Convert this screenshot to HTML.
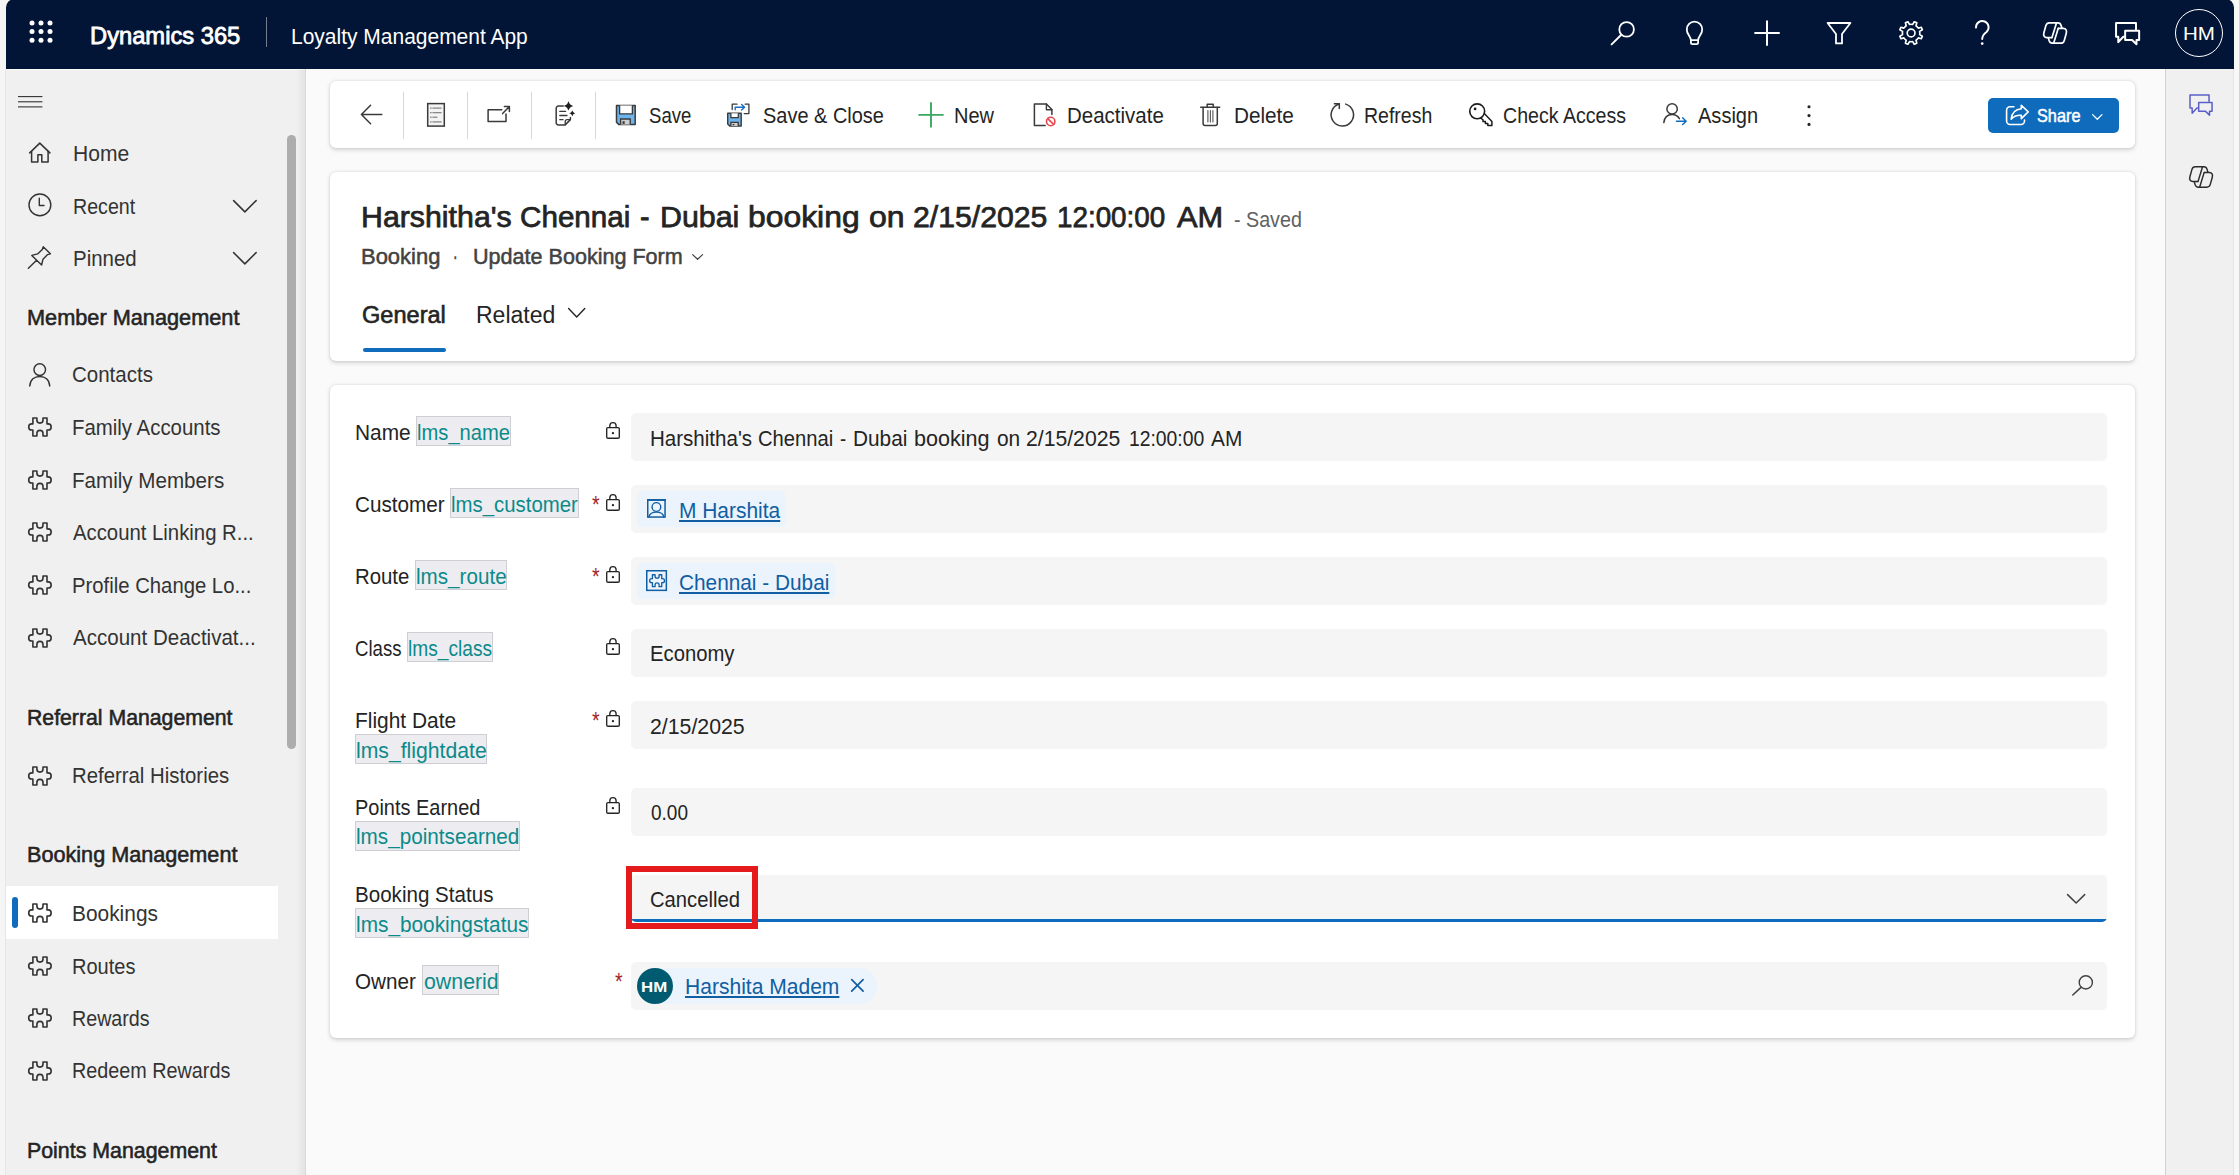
<!DOCTYPE html>
<html lang="en"><head><meta charset="utf-8"><title>Booking: Harshitha's Chennai - Dubai booking - Dynamics 365</title>
<style>
html,body{margin:0;padding:0}
body{width:2239px;height:1175px;overflow:hidden;position:relative;background:#f5f5f5;font-family:"Liberation Sans", Arial, sans-serif;-webkit-font-smoothing:antialiased}
span{display:block}
</style></head><body>
<div style="position:absolute;left:2234px;top:0px;width:5px;height:1175px;background:#f8f8f8;"></div>
<div style="position:absolute;left:6px;top:69px;width:2228px;height:1106px;background:#fafafa;"></div>
<header>
<div style="position:absolute;left:6px;top:-1.3px;width:2228px;height:70.3px;background:#021536;border-radius:8.5px 8.5px 0 0;"></div>
<svg style="position:absolute;left:28px;top:19.2px;overflow:visible" width="26" height="26" viewBox="0 0 26 26" ><circle cx="4" cy="4" r="2.5" fill="#fff"/><circle cx="4" cy="12.600000000000001" r="2.5" fill="#fff"/><circle cx="4" cy="21.200000000000003" r="2.5" fill="#fff"/><circle cx="13" cy="4" r="2.5" fill="#fff"/><circle cx="13" cy="12.600000000000001" r="2.5" fill="#fff"/><circle cx="13" cy="21.200000000000003" r="2.5" fill="#fff"/><circle cx="22" cy="4" r="2.5" fill="#fff"/><circle cx="22" cy="12.600000000000001" r="2.5" fill="#fff"/><circle cx="22" cy="21.200000000000003" r="2.5" fill="#fff"/></svg>
<span style="position:absolute;left:89.89px;top:21px;font-size:23.5px;line-height:30px;font-weight:400;color:#fff;white-space:pre;transform-origin:0 0;transform:scaleX(1.0093);-webkit-text-stroke:0.8px #fff;">Dynamics 365</span>
<div style="position:absolute;left:266px;top:17px;width:1px;height:30px;background:rgba(255,255,255,.45);"></div>
<span style="position:absolute;left:290.77px;top:23px;font-size:21.5px;line-height:28px;font-weight:400;color:#fff;white-space:pre;transform-origin:0 0;transform:scaleX(0.9759);">Loyalty Management App</span>
<svg style="position:absolute;left:1608px;top:18px;overflow:visible" width="30" height="30" viewBox="0 0 30 30" ><circle cx="18.59999999999991" cy="11.399999999999999" r="7.3" fill="none" stroke="#fff" stroke-width="1.8"/><path d="M13.299999999999955 16.799999999999997 L3.599999999999909 26.4" fill="none" stroke="#fff" stroke-width="1.9" stroke-linecap="round" stroke-linejoin="round" /></svg>
<svg style="position:absolute;left:1682px;top:18px;overflow:visible" width="26" height="30" viewBox="0 0 26 30" ><path d="M8.9 22.200000000000003 C8.9 18.200000000000003 4.8 17 4.8 11.399999999999999 A7.7 7.7 0 0 1 20.2 11.399999999999999 C20.2 17 16.1 18.200000000000003 16.1 22.200000000000003 Z" fill="none" stroke="#fff" stroke-width="1.8" stroke-linecap="round" stroke-linejoin="round" /><path d="M8.9 22.200000000000003 V24.6 a1.6 1.6 0 0 0 1.6 1.6 H14.5 a1.6 1.6 0 0 0 1.6 -1.6 V22.200000000000003" fill="none" stroke="#fff" stroke-width="1.8" stroke-linecap="round" stroke-linejoin="round" /></svg>
<svg style="position:absolute;left:1752px;top:18px;overflow:visible" width="30" height="30" viewBox="0 0 30 30" ><path d="M15 3.2 V27 M3.1 15.1 H27" fill="none" stroke="#fff" stroke-width="2.0" stroke-linecap="round" stroke-linejoin="round" stroke-linecap="butt"/></svg>
<svg style="position:absolute;left:1824px;top:18px;overflow:visible" width="30" height="30" viewBox="0 0 30 30" ><path d="M3.599999999999909 5 H26.40000000000009 L18 16 V25.4 H12 V16 Z" fill="none" stroke="#fff" stroke-width="1.8" stroke-linecap="round" stroke-linejoin="round" stroke-linejoin="miter"/></svg>
<svg style="position:absolute;left:1895.6px;top:18px;overflow:visible" width="30" height="30" viewBox="0 0 30 30" ><path d="M23.65 16.63 L26.36 18.18 L25.31 20.72 L22.30 19.89 A8.70 8.70 0 0 1 19.99 22.20 L20.82 25.21 L18.28 26.26 L16.73 23.55 A8.70 8.70 0 0 1 13.47 23.55 L11.92 26.26 L9.38 25.21 L10.21 22.20 A8.70 8.70 0 0 1 7.90 19.89 L4.89 20.72 L3.84 18.18 L6.55 16.63 A8.70 8.70 0 0 1 6.55 13.37 L3.84 11.82 L4.89 9.28 L7.90 10.11 A8.70 8.70 0 0 1 10.21 7.80 L9.38 4.79 L11.92 3.74 L13.47 6.45 A8.70 8.70 0 0 1 16.73 6.45 L18.28 3.74 L20.82 4.79 L19.99 7.80 A8.70 8.70 0 0 1 22.30 10.11 L25.31 9.28 L26.36 11.82 L23.65 13.37 A8.70 8.70 0 0 1 23.65 16.63 Z" fill="none" stroke="#fff" stroke-width="1.65" stroke-linecap="round" stroke-linejoin="round" /><circle cx="15.1" cy="15" r="3.9" fill="none" stroke="#fff" stroke-width="1.65"/></svg>
<svg style="position:absolute;left:1970px;top:18px;overflow:visible" width="26" height="30" viewBox="0 0 26 30" ><path d="M6.000000000000045 9.600000000000001 A6.3 6.3 0 1 1 16.500000000000046 14 C13.700000000000045 16.200000000000003 12.200000000000045 17.6 12.200000000000045 21" fill="none" stroke="#fff" stroke-width="1.9" stroke-linecap="round" stroke-linejoin="round" /><circle cx="12.200000000000045" cy="25.6" r="1.35" fill="#fff"/></svg>
<svg style="position:absolute;left:2042.9px;top:21.9px;overflow:visible" width="24.2" height="22" viewBox="0 0 24.2 22" ><path d="M13.8 0.8 H6.4 C4.4 0.8 3.4 1.9 2.9 3.6 L0.9 10.8 C0.2 13.4 1.2 15.6 3.8 15.6 H8.8" fill="none" stroke="#fff" stroke-width="1.7" stroke-linecap="round" stroke-linejoin="round" /><path d="M13.8 0.8 H15 C16.8 0.8 17.6 1.8 18.1 3.4 L18.9 6.2" fill="none" stroke="#fff" stroke-width="1.7" stroke-linecap="round" stroke-linejoin="round" /><path d="M10.4 21.2 H17.8 C19.8 21.2 20.8 20.1 21.3 18.4 L23.3 11.2 C24 8.6 23 6.4 20.4 6.4 H15.4" fill="none" stroke="#fff" stroke-width="1.7" stroke-linecap="round" stroke-linejoin="round" /><path d="M10.4 21.2 H9.2 C7.4 21.2 6.6 20.2 6.1 18.6 L5.3 15.8" fill="none" stroke="#fff" stroke-width="1.7" stroke-linecap="round" stroke-linejoin="round" /><path d="M13.4 1.2 L9 15.6" fill="none" stroke="#fff" stroke-width="1.7" stroke-linecap="round" stroke-linejoin="round" /><path d="M15.2 6.4 L10.8 20.8" fill="none" stroke="#fff" stroke-width="1.7" stroke-linecap="round" stroke-linejoin="round" /></svg>
<svg style="position:absolute;left:2114.7px;top:22.05px;overflow:visible" width="25.2" height="23.0" viewBox="0 0 25.2 23" ><path d="M21 7.8 V1.05 H1.05 V14.75 H3.3 V20.2 L8.3 14.75 H9.2" fill="none" stroke="#fff" stroke-width="2.0" stroke-linecap="round" stroke-linejoin="round" stroke-linejoin="miter" stroke-linecap="butt"/><path d="M10.15 8.85 H24.15 V17.95 H21.5 V22.3 L17.1 17.95 H10.15 Z" fill="none" stroke="#fff" stroke-width="2.0" stroke-linecap="round" stroke-linejoin="round" stroke-linejoin="miter" stroke-linecap="butt"/></svg>
<div style="position:absolute;left:2174.8px;top:8.9px;width:48.3px;height:48.3px;border-radius:50%;box-sizing:border-box;border:1.3px solid #fff;"></div>
<span style="position:absolute;left:2182.92px;top:21px;font-size:19px;line-height:25px;font-weight:400;color:#fff;white-space:pre;transform-origin:0 0;transform:scaleX(1.0822);">HM</span>
</header>
<nav aria-label="Site map">
<div style="position:absolute;left:6px;top:69px;width:299px;height:1106px;background:#f0f0f0;"></div>
<div style="position:absolute;left:6px;top:69px;width:299px;height:1.2px;background:#fbfbfb;"></div>
<div style="position:absolute;left:296px;top:69px;width:9px;height:1106px;background:linear-gradient(to right,rgba(0,0,0,0),rgba(0,0,0,.055));"></div>
<div style="position:absolute;left:305px;top:69px;width:1px;height:1106px;background:#d9d9d9;"></div>
<div style="position:absolute;left:287px;top:135px;width:8.8px;height:613.5px;background:#adadad;border-radius:4.4px;"></div>
<svg style="position:absolute;left:17.8px;top:95.7px;overflow:visible" width="25" height="13" viewBox="0 0 25 13" ><rect x="0" y="0" width="24.4" height="1.15" fill="#3b3b3b"/><rect x="0" y="5.2" width="24.4" height="1.15" fill="#3b3b3b"/><rect x="0" y="10.3" width="24.4" height="1.15" fill="#3b3b3b"/></svg>
<svg style="position:absolute;left:28px;top:141px;overflow:visible" width="24" height="23" viewBox="0 0 24 23" ><path d="M1.70 11.90 L11.80 2.10 L21.90 11.90" fill="none" stroke="#333" stroke-width="1.5" stroke-linecap="round" stroke-linejoin="round" stroke-linejoin="miter" stroke-linecap="butt"/><path d="M3.60 10.60 V21.00 H9.90 V13.70 H13.80 V21.00 H20.10 V10.60" fill="none" stroke="#333" stroke-width="1.5" stroke-linecap="round" stroke-linejoin="round" stroke-linejoin="miter" stroke-linecap="butt"/></svg>
<span style="position:absolute;left:72.77px;top:140px;font-size:21.5px;line-height:28px;font-weight:400;color:#333;white-space:pre;transform-origin:0 0;transform:scaleX(0.9794);">Home</span>
<svg style="position:absolute;left:28px;top:193px;overflow:visible" width="24" height="24" viewBox="0 0 24 24" ><circle cx="11.899999999999999" cy="11.900000000000006" r="10.9" fill="none" stroke="#333" stroke-width="1.4"/><path d="M11.299999999999997 5.199999999999989 V12.5 H16" fill="none" stroke="#333" stroke-width="1.4" stroke-linecap="round" stroke-linejoin="round" stroke-linejoin="miter" stroke-linecap="butt"/></svg>
<span style="position:absolute;left:72.84px;top:193px;font-size:21.5px;line-height:28px;font-weight:400;color:#333;white-space:pre;transform-origin:0 0;transform:scaleX(0.9122);">Recent</span>
<svg style="position:absolute;left:233px;top:200px;overflow:visible" width="23.75" height="12.5" viewBox="0 0 23.75 12.5" ><path d="M0.6 0.6 L11.875 11.9 L23.15 0.6" fill="none" stroke="#333" stroke-width="1.5" stroke-linecap="round" stroke-linejoin="round" stroke-linejoin="miter"/></svg>
<svg style="position:absolute;left:27px;top:245px;overflow:visible" width="25" height="25" viewBox="0 0 25 25" ><path d="M16.20 1.80 L23.40 8.80 L20.60 9.60 L16.00 14.20 L14.60 20.00 L4.80 10.40 L10.60 8.90 L15.30 4.40 Z M9.60 15.20 L1.40 23.20" fill="none" stroke="#333" stroke-width="1.4" stroke-linecap="round" stroke-linejoin="round" stroke-linejoin="miter"/></svg>
<span style="position:absolute;left:72.80px;top:245px;font-size:21.5px;line-height:28px;font-weight:400;color:#333;white-space:pre;transform-origin:0 0;transform:scaleX(0.9502);">Pinned</span>
<svg style="position:absolute;left:233px;top:252px;overflow:visible" width="23.75" height="12.5" viewBox="0 0 23.75 12.5" ><path d="M0.6 0.6 L11.875 11.9 L23.15 0.6" fill="none" stroke="#333" stroke-width="1.5" stroke-linecap="round" stroke-linejoin="round" stroke-linejoin="miter"/></svg>
<span style="position:absolute;left:27.26px;top:304px;font-size:21.5px;line-height:28px;font-weight:400;color:#242424;white-space:pre;transform-origin:0 0;transform:scaleX(1.0101);-webkit-text-stroke:0.55px #242424;">Member Management</span>
<svg style="position:absolute;left:29.25px;top:362.5px;overflow:visible" width="21.5" height="23.5" viewBox="0 0 21.5 23.5" ><circle cx="10.75" cy="6.6" r="5.8" fill="none" stroke="#333" stroke-width="1.45"/><path d="M0.8 23 C1.2 16.6 5.4 13.4 10.75 13.4 C16.1 13.4 20.3 16.6 20.7 23" fill="none" stroke="#333" stroke-width="1.45" stroke-linecap="round" stroke-linejoin="round" stroke-linecap="butt"/></svg>
<span style="position:absolute;left:72.30px;top:361px;font-size:21.5px;line-height:28px;font-weight:400;color:#333;white-space:pre;transform-origin:0 0;transform:scaleX(0.9537);">Contacts</span>
<div style="position:absolute;left:6px;top:886px;width:272px;height:53px;background:#fff;"></div>
<div style="position:absolute;left:12px;top:897.25px;width:6px;height:30.5px;background:#0f6cbd;border-radius:3px;"></div>
<svg style="position:absolute;left:28px;top:417.4px;overflow:visible" width="24.0" height="20.0" viewBox="0 0 24 20" ><path d="M4.9 0.95 H8.9 V3.1 A3.05 3.05 0 0 0 15 3.1 V0.95 H19 V6.9 H20.1 A3.07 3.07 0 0 1 20.1 13.05 H19 V19 H15 V16.4 A3.05 3.05 0 0 0 8.9 16.4 V19 H4.9 V13.05 H3.77 A3.07 3.07 0 0 1 3.77 6.9 H4.9 Z" fill="none" stroke="#333" stroke-width="1.6" stroke-linecap="round" stroke-linejoin="round" stroke-linejoin="miter" stroke-linecap="butt"/></svg>
<span style="position:absolute;left:72.30px;top:414px;font-size:21.5px;line-height:28px;font-weight:400;color:#333;white-space:pre;transform-origin:0 0;transform:scaleX(0.9489);">Family Accounts</span>
<svg style="position:absolute;left:28px;top:469.9px;overflow:visible" width="24.0" height="20.0" viewBox="0 0 24 20" ><path d="M4.9 0.95 H8.9 V3.1 A3.05 3.05 0 0 0 15 3.1 V0.95 H19 V6.9 H20.1 A3.07 3.07 0 0 1 20.1 13.05 H19 V19 H15 V16.4 A3.05 3.05 0 0 0 8.9 16.4 V19 H4.9 V13.05 H3.77 A3.07 3.07 0 0 1 3.77 6.9 H4.9 Z" fill="none" stroke="#333" stroke-width="1.6" stroke-linecap="round" stroke-linejoin="round" stroke-linejoin="miter" stroke-linecap="butt"/></svg>
<span style="position:absolute;left:72.29px;top:467px;font-size:21.5px;line-height:28px;font-weight:400;color:#333;white-space:pre;transform-origin:0 0;transform:scaleX(0.9578);">Family Members</span>
<svg style="position:absolute;left:28px;top:522.4px;overflow:visible" width="24.0" height="20.0" viewBox="0 0 24 20" ><path d="M4.9 0.95 H8.9 V3.1 A3.05 3.05 0 0 0 15 3.1 V0.95 H19 V6.9 H20.1 A3.07 3.07 0 0 1 20.1 13.05 H19 V19 H15 V16.4 A3.05 3.05 0 0 0 8.9 16.4 V19 H4.9 V13.05 H3.77 A3.07 3.07 0 0 1 3.77 6.9 H4.9 Z" fill="none" stroke="#333" stroke-width="1.6" stroke-linecap="round" stroke-linejoin="round" stroke-linejoin="miter" stroke-linecap="butt"/></svg>
<span style="position:absolute;left:73.25px;top:519px;font-size:21.5px;line-height:28px;font-weight:400;color:#333;white-space:pre;transform-origin:0 0;transform:scaleX(0.9449);">Account Linking R...</span>
<svg style="position:absolute;left:28px;top:575.15px;overflow:visible" width="24.0" height="20.0" viewBox="0 0 24 20" ><path d="M4.9 0.95 H8.9 V3.1 A3.05 3.05 0 0 0 15 3.1 V0.95 H19 V6.9 H20.1 A3.07 3.07 0 0 1 20.1 13.05 H19 V19 H15 V16.4 A3.05 3.05 0 0 0 8.9 16.4 V19 H4.9 V13.05 H3.77 A3.07 3.07 0 0 1 3.77 6.9 H4.9 Z" fill="none" stroke="#333" stroke-width="1.6" stroke-linecap="round" stroke-linejoin="round" stroke-linejoin="miter" stroke-linecap="butt"/></svg>
<span style="position:absolute;left:72.31px;top:572px;font-size:21.5px;line-height:28px;font-weight:400;color:#333;white-space:pre;transform-origin:0 0;transform:scaleX(0.9438);">Profile Change Lo...</span>
<svg style="position:absolute;left:28px;top:627.65px;overflow:visible" width="24.0" height="20.0" viewBox="0 0 24 20" ><path d="M4.9 0.95 H8.9 V3.1 A3.05 3.05 0 0 0 15 3.1 V0.95 H19 V6.9 H20.1 A3.07 3.07 0 0 1 20.1 13.05 H19 V19 H15 V16.4 A3.05 3.05 0 0 0 8.9 16.4 V19 H4.9 V13.05 H3.77 A3.07 3.07 0 0 1 3.77 6.9 H4.9 Z" fill="none" stroke="#333" stroke-width="1.6" stroke-linecap="round" stroke-linejoin="round" stroke-linejoin="miter" stroke-linecap="butt"/></svg>
<span style="position:absolute;left:73.25px;top:624px;font-size:21.5px;line-height:28px;font-weight:400;color:#333;white-space:pre;transform-origin:0 0;transform:scaleX(0.9554);">Account Deactivat...</span>
<span style="position:absolute;left:27.29px;top:704px;font-size:21.5px;line-height:28px;font-weight:400;color:#242424;white-space:pre;transform-origin:0 0;transform:scaleX(0.9879);-webkit-text-stroke:0.55px #242424;">Referral Management</span>
<svg style="position:absolute;left:28px;top:765.65px;overflow:visible" width="24.0" height="20.0" viewBox="0 0 24 20" ><path d="M4.9 0.95 H8.9 V3.1 A3.05 3.05 0 0 0 15 3.1 V0.95 H19 V6.9 H20.1 A3.07 3.07 0 0 1 20.1 13.05 H19 V19 H15 V16.4 A3.05 3.05 0 0 0 8.9 16.4 V19 H4.9 V13.05 H3.77 A3.07 3.07 0 0 1 3.77 6.9 H4.9 Z" fill="none" stroke="#333" stroke-width="1.6" stroke-linecap="round" stroke-linejoin="round" stroke-linejoin="miter" stroke-linecap="butt"/></svg>
<span style="position:absolute;left:72.30px;top:762px;font-size:21.5px;line-height:28px;font-weight:400;color:#333;white-space:pre;transform-origin:0 0;transform:scaleX(0.9463);">Referral Histories</span>
<span style="position:absolute;left:27.27px;top:841px;font-size:21.5px;line-height:28px;font-weight:400;color:#242424;white-space:pre;transform-origin:0 0;transform:scaleX(1.0061);-webkit-text-stroke:0.55px #242424;">Booking Management</span>
<svg style="position:absolute;left:28px;top:903.4px;overflow:visible" width="24.0" height="20.0" viewBox="0 0 24 20" ><path d="M4.9 0.95 H8.9 V3.1 A3.05 3.05 0 0 0 15 3.1 V0.95 H19 V6.9 H20.1 A3.07 3.07 0 0 1 20.1 13.05 H19 V19 H15 V16.4 A3.05 3.05 0 0 0 8.9 16.4 V19 H4.9 V13.05 H3.77 A3.07 3.07 0 0 1 3.77 6.9 H4.9 Z" fill="none" stroke="#333" stroke-width="1.6" stroke-linecap="round" stroke-linejoin="round" stroke-linejoin="miter" stroke-linecap="butt"/></svg>
<span style="position:absolute;left:72.28px;top:900px;font-size:21.5px;line-height:28px;font-weight:400;color:#333;white-space:pre;transform-origin:0 0;transform:scaleX(0.9718);">Bookings</span>
<svg style="position:absolute;left:28px;top:955.9px;overflow:visible" width="24.0" height="20.0" viewBox="0 0 24 20" ><path d="M4.9 0.95 H8.9 V3.1 A3.05 3.05 0 0 0 15 3.1 V0.95 H19 V6.9 H20.1 A3.07 3.07 0 0 1 20.1 13.05 H19 V19 H15 V16.4 A3.05 3.05 0 0 0 8.9 16.4 V19 H4.9 V13.05 H3.77 A3.07 3.07 0 0 1 3.77 6.9 H4.9 Z" fill="none" stroke="#333" stroke-width="1.6" stroke-linecap="round" stroke-linejoin="round" stroke-linejoin="miter" stroke-linecap="butt"/></svg>
<span style="position:absolute;left:72.32px;top:953px;font-size:21.5px;line-height:28px;font-weight:400;color:#333;white-space:pre;transform-origin:0 0;transform:scaleX(0.9304);">Routes</span>
<svg style="position:absolute;left:28px;top:1008.4px;overflow:visible" width="24.0" height="20.0" viewBox="0 0 24 20" ><path d="M4.9 0.95 H8.9 V3.1 A3.05 3.05 0 0 0 15 3.1 V0.95 H19 V6.9 H20.1 A3.07 3.07 0 0 1 20.1 13.05 H19 V19 H15 V16.4 A3.05 3.05 0 0 0 8.9 16.4 V19 H4.9 V13.05 H3.77 A3.07 3.07 0 0 1 3.77 6.9 H4.9 Z" fill="none" stroke="#333" stroke-width="1.6" stroke-linecap="round" stroke-linejoin="round" stroke-linejoin="miter" stroke-linecap="butt"/></svg>
<span style="position:absolute;left:72.34px;top:1005px;font-size:21.5px;line-height:28px;font-weight:400;color:#333;white-space:pre;transform-origin:0 0;transform:scaleX(0.9147);">Rewards</span>
<svg style="position:absolute;left:28px;top:1060.9px;overflow:visible" width="24.0" height="20.0" viewBox="0 0 24 20" ><path d="M4.9 0.95 H8.9 V3.1 A3.05 3.05 0 0 0 15 3.1 V0.95 H19 V6.9 H20.1 A3.07 3.07 0 0 1 20.1 13.05 H19 V19 H15 V16.4 A3.05 3.05 0 0 0 8.9 16.4 V19 H4.9 V13.05 H3.77 A3.07 3.07 0 0 1 3.77 6.9 H4.9 Z" fill="none" stroke="#333" stroke-width="1.6" stroke-linecap="round" stroke-linejoin="round" stroke-linejoin="miter" stroke-linecap="butt"/></svg>
<span style="position:absolute;left:72.33px;top:1057px;font-size:21.5px;line-height:28px;font-weight:400;color:#333;white-space:pre;transform-origin:0 0;transform:scaleX(0.9203);">Redeem Rewards</span>
<span style="position:absolute;left:27.28px;top:1137px;font-size:21.5px;line-height:28px;font-weight:400;color:#242424;white-space:pre;transform-origin:0 0;transform:scaleX(0.9932);-webkit-text-stroke:0.55px #242424;">Points Management</span>
</nav>
<aside>
<div style="position:absolute;left:2165px;top:69px;width:69px;height:1106px;background:#f0f0f0;"></div>
<div style="position:absolute;left:2164.5px;top:69px;width:1px;height:1106px;background:#d1d1d1;"></div>
<div style="position:absolute;left:2233.4px;top:69px;width:1px;height:1106px;background:#e4e4e4;"></div>
<div style="position:absolute;left:5px;top:69px;width:1px;height:1106px;background:#e6e6e6;"></div>
<svg style="position:absolute;left:2188.8px;top:94.0px;overflow:visible" width="24.066" height="21.965" viewBox="0 0 25.2 23" ><path d="M21 7.8 V1.05 H1.05 V14.75 H3.3 V20.2 L8.3 14.75 H9.2" fill="none" stroke="#5b5fc7" stroke-width="1.5706806282722514" stroke-linecap="round" stroke-linejoin="round" stroke-linejoin="miter" stroke-linecap="butt"/><path d="M10.15 8.85 H24.15 V17.95 H21.5 V22.3 L17.1 17.95 H10.15 Z" fill="none" stroke="#5b5fc7" stroke-width="1.5706806282722514" stroke-linecap="round" stroke-linejoin="round" stroke-linejoin="miter" stroke-linecap="butt"/></svg>
<svg style="position:absolute;left:2189px;top:165.9px;overflow:visible" width="24.2" height="22" viewBox="0 0 24.2 22" ><path d="M13.8 0.8 H6.4 C4.4 0.8 3.4 1.9 2.9 3.6 L0.9 10.8 C0.2 13.4 1.2 15.6 3.8 15.6 H8.8" fill="none" stroke="#2b2b2b" stroke-width="1.45" stroke-linecap="round" stroke-linejoin="round" /><path d="M13.8 0.8 H15 C16.8 0.8 17.6 1.8 18.1 3.4 L18.9 6.2" fill="none" stroke="#2b2b2b" stroke-width="1.45" stroke-linecap="round" stroke-linejoin="round" /><path d="M10.4 21.2 H17.8 C19.8 21.2 20.8 20.1 21.3 18.4 L23.3 11.2 C24 8.6 23 6.4 20.4 6.4 H15.4" fill="none" stroke="#2b2b2b" stroke-width="1.45" stroke-linecap="round" stroke-linejoin="round" /><path d="M10.4 21.2 H9.2 C7.4 21.2 6.6 20.2 6.1 18.6 L5.3 15.8" fill="none" stroke="#2b2b2b" stroke-width="1.45" stroke-linecap="round" stroke-linejoin="round" /><path d="M13.4 1.2 L9 15.6" fill="none" stroke="#2b2b2b" stroke-width="1.45" stroke-linecap="round" stroke-linejoin="round" /><path d="M15.2 6.4 L10.8 20.8" fill="none" stroke="#2b2b2b" stroke-width="1.45" stroke-linecap="round" stroke-linejoin="round" /></svg>
</aside>
<main>
<div role="toolbar">
<div style="position:absolute;left:330px;top:81px;width:1805px;height:67px;background:#fff;border-radius:6px;box-shadow:0 1.5px 4px rgba(0,0,0,.16),0 0 2px rgba(0,0,0,.10);"></div>
<svg style="position:absolute;left:359px;top:103px;overflow:visible" width="25" height="23" viewBox="0 0 25 23" ><path d="M22.8 11.5 H2.4 M11.6 2.3 L2.4 11.5 L11.6 20.7" fill="none" stroke="#3a3a3a" stroke-width="1.5" stroke-linecap="round" stroke-linejoin="round" stroke-linejoin="miter" stroke-linecap="butt"/></svg>
<div style="position:absolute;left:403px;top:91.5px;width:1px;height:47px;background:#d6d6d6;"></div>
<div style="position:absolute;left:467px;top:91.5px;width:1px;height:47px;background:#d6d6d6;"></div>
<div style="position:absolute;left:531px;top:91.5px;width:1px;height:47px;background:#d6d6d6;"></div>
<div style="position:absolute;left:595px;top:91.5px;width:1px;height:47px;background:#d6d6d6;"></div>
<svg style="position:absolute;left:426px;top:102px;overflow:visible" width="20" height="26" viewBox="0 0 20 26" ><rect x="1.6999999999999886" y="1.5999999999999943" width="16.6" height="22.5" fill="#f3f3f3" stroke="#3a3a3a" stroke-width="1.5"/><rect x="4.20" y="5.55" width="1.3" height="1.1" fill="#555"/><rect x="6.40" y="5.55" width="9.20" height="1.1" fill="#777"/><rect x="4.20" y="10.15" width="1.3" height="1.1" fill="#555"/><rect x="6.40" y="10.15" width="9.20" height="1.1" fill="#777"/><rect x="4.20" y="14.65" width="1.3" height="1.1" fill="#555"/><rect x="6.40" y="14.65" width="5.00" height="1.1" fill="#777"/><rect x="4.20" y="19.35" width="1.3" height="1.1" fill="#555"/><rect x="6.40" y="19.35" width="9.20" height="1.1" fill="#777"/></svg>
<svg style="position:absolute;left:486px;top:104px;overflow:visible" width="25" height="20" viewBox="0 0 25 20" ><path d="M15.80 5.80 H2.10 V17.50 H20.00 V10.00" fill="none" stroke="#3a3a3a" stroke-width="1.5" stroke-linecap="round" stroke-linejoin="round" stroke-linejoin="miter" stroke-linecap="butt"/><path d="M16.60 9.60 L23.20 2.80 M18.40 2.60 H23.40 V7.40" fill="none" stroke="#3a3a3a" stroke-width="1.5" stroke-linecap="round" stroke-linejoin="round" stroke-linejoin="miter" stroke-linecap="butt"/></svg>
<svg style="position:absolute;left:554px;top:100px;overflow:visible" width="24" height="28" viewBox="0 0 24 28" ><path d="M9.20 6.10 H4.40 A2.2 2.2 0 0 0 2.20 8.30 V22.70 A2.2 2.2 0 0 0 4.40 24.90 H11.20 L16.40 19.60 V17.40" fill="none" stroke="#3a3a3a" stroke-width="1.5" stroke-linecap="round" stroke-linejoin="round" /><path d="M11.20 24.60 V21.60 A2 2 0 0 1 13.20 19.60 H16.20" fill="none" stroke="#3a3a3a" stroke-width="1.3" stroke-linecap="round" stroke-linejoin="round" /><path d="M5.80 11.40 H11.60 M5.80 15.50 H13.00 M5.80 19.70 H9.00" fill="none" stroke="#3a3a3a" stroke-width="1.3" stroke-linecap="round" stroke-linejoin="round" stroke-linecap="butt"/><path d="M14.5 1.2000000000000055 C15.91 4.4900000000000055 15.91 4.4900000000000055 19.2 5.900000000000006 C15.91 7.310000000000006 15.91 7.310000000000006 14.5 10.600000000000005 C13.09 7.310000000000006 13.09 7.310000000000006 9.8 5.900000000000006 C13.09 4.4900000000000055 13.09 4.4900000000000055 14.5 1.2000000000000055 Z" fill="#1f1f1f"/><path d="M18.299999999999955 10.199999999999998 C19.229999999999954 12.369999999999997 19.229999999999954 12.369999999999997 21.399999999999956 13.299999999999997 C19.229999999999954 14.229999999999997 19.229999999999954 14.229999999999997 18.299999999999955 16.4 C17.369999999999955 14.229999999999997 17.369999999999955 14.229999999999997 15.199999999999955 13.299999999999997 C17.369999999999955 12.369999999999997 17.369999999999955 12.369999999999997 18.299999999999955 10.199999999999998 Z" fill="#1f1f1f"/></svg>
<svg style="position:absolute;left:614px;top:103px;overflow:visible" width="24" height="24" viewBox="0 0 24 24" ><path d="M2.5 2.5 H21.2 V21.6 H4.9 L2.5 19.200000000000003 Z" fill="#6db3ec" stroke="#3a3a3a" stroke-width="1.5" stroke-linejoin="round"/><path d="M5.600000000000023 2.5 V10.799999999999997 H18.399999999999977 V2.5" fill="#fff" stroke="#3a3a3a" stroke-width="1.35" stroke-linejoin="miter"/><path d="M6.600000000000023 21.6 V16 H16.200000000000045 V21.6" fill="#cfcfcf" stroke="#3a3a3a" stroke-width="1.35" stroke-linejoin="miter"/><rect x="8.5" y="18.200000000000003" width="2.2000000000000455" height="2.65" fill="#3a3a3a"/></svg>
<span style="position:absolute;left:649.25px;top:102px;font-size:21.5px;line-height:28px;font-weight:400;color:#242424;white-space:pre;transform-origin:0 0;transform:scaleX(0.8637);">Save</span>
<svg style="position:absolute;left:726px;top:102px;overflow:visible" width="25" height="26" viewBox="0 0 25 26" ><path d="M1.7000000000000455 11.299999999999997 H15.200000000000045 V23.999999999999996 H3.7000000000000455 L1.7000000000000455 21.999999999999996 Z" fill="#6db3ec" stroke="#3a3a3a" stroke-width="1.4" stroke-linejoin="round"/><path d="M4.899999999999977 11.299999999999997 V15.700000000000003 H12.299999999999955 V11.299999999999997" fill="#fff" stroke="#3a3a3a" stroke-width="1.26" stroke-linejoin="miter"/><path d="M4.899999999999977 23.999999999999996 V20.299999999999997 H12.200000000000045 V23.999999999999996" fill="#cfcfcf" stroke="#3a3a3a" stroke-width="1.26" stroke-linejoin="miter"/><rect x="6.600000000000023" y="22" width="1.7999999999999545" height="1.30" fill="#3a3a3a"/><path d="M6.20 7.60 V2.20 H11.00" fill="none" stroke="#3a3a3a" stroke-width="1.3" stroke-linecap="round" stroke-linejoin="round" stroke-linejoin="miter" stroke-linecap="butt"/><path d="M19.20 2.20 H22.90 V11.60 H18.20" fill="none" stroke="#3a3a3a" stroke-width="1.3" stroke-linecap="round" stroke-linejoin="round" stroke-linejoin="miter" stroke-linecap="butt"/><path d="M9.20 7.80 V5.20 H18.40 M15.60 2.40 L18.60 5.20 L15.60 8.00" fill="none" stroke="#1b6ec2" stroke-width="1.4" stroke-linecap="round" stroke-linejoin="round" stroke-linejoin="miter" stroke-linecap="butt"/></svg>
<span style="position:absolute;left:762.50px;top:102px;font-size:21.5px;line-height:28px;font-weight:400;color:#242424;white-space:pre;transform-origin:0 0;transform:scaleX(0.9281);">Save &amp; Close</span>
<svg style="position:absolute;left:918px;top:102px;overflow:visible" width="26" height="26" viewBox="0 0 26 26" ><path d="M13.00 1.00 V24.80 M1.10 12.90 H24.90" fill="none" stroke="#3aa860" stroke-width="1.9" stroke-linecap="round" stroke-linejoin="round" stroke-linecap="butt"/></svg>
<span style="position:absolute;left:954.07px;top:102px;font-size:21.5px;line-height:28px;font-weight:400;color:#242424;white-space:pre;transform-origin:0 0;transform:scaleX(0.9298);">New</span>
<svg style="position:absolute;left:1032px;top:102px;overflow:visible" width="26" height="26" viewBox="0 0 26 26" ><path d="M13.20 23.60 H2.40 V1.90 H14.40 L19.90 7.60 V12.60" fill="none" stroke="#3a3a3a" stroke-width="1.5" stroke-linecap="round" stroke-linejoin="round" stroke-linejoin="miter" stroke-linecap="butt"/><path d="M14.40 2.00 V7.80 H19.80" fill="none" stroke="#3a3a3a" stroke-width="1.4" stroke-linecap="round" stroke-linejoin="round" stroke-linejoin="miter" stroke-linecap="butt"/><circle cx="18.70" cy="19.50" r="4.2" fill="#fff" stroke="#e8474f" stroke-width="1.6"/><path d="M15.80 16.60 L21.60 22.40" fill="none" stroke="#e8474f" stroke-width="1.6" stroke-linecap="round" stroke-linejoin="round" /></svg>
<span style="position:absolute;left:1066.55px;top:102px;font-size:21.5px;line-height:28px;font-weight:400;color:#242424;white-space:pre;transform-origin:0 0;transform:scaleX(0.9536);">Deactivate</span>
<svg style="position:absolute;left:1199px;top:102px;overflow:visible" width="24" height="26" viewBox="0 0 24 26" ><path d="M1.70 5.20 H20.70 M8.20 5.00 V2.30 H14.20 V5.00" fill="none" stroke="#3a3a3a" stroke-width="1.5" stroke-linecap="round" stroke-linejoin="round" stroke-linejoin="miter" stroke-linecap="butt"/><path d="M4.10 5.40 V21.60 A2 2 0 0 0 6.10 23.60 H16.30 A2 2 0 0 0 18.30 21.60 V5.40" fill="none" stroke="#3a3a3a" stroke-width="1.5" stroke-linecap="round" stroke-linejoin="round" stroke-linecap="butt"/><path d="M8.90 8.60 V20.00 M11.40 8.60 V20.00 M13.90 8.60 V20.00" fill="none" stroke="#555" stroke-width="1.1" stroke-linecap="round" stroke-linejoin="round" stroke-linecap="butt"/></svg>
<span style="position:absolute;left:1234.04px;top:102px;font-size:21.5px;line-height:28px;font-weight:400;color:#242424;white-space:pre;transform-origin:0 0;transform:scaleX(0.9636);">Delete</span>
<svg style="position:absolute;left:1329.5px;top:103.2px;overflow:visible" width="25" height="25" viewBox="0 0 25 25" ><path d="M9.3 1.0 A11.2 11.2 0 1 0 15.7 1.1" fill="none" stroke="#3a3a3a" stroke-width="1.5" stroke-linecap="round" stroke-linejoin="round" stroke-linecap="butt"/><path d="M4.4 0.7 H9.3 V5.5" fill="none" stroke="#3a3a3a" stroke-width="1.5" stroke-linecap="round" stroke-linejoin="round" stroke-linejoin="miter" stroke-linecap="butt"/></svg>
<span style="position:absolute;left:1364.09px;top:102px;font-size:21.5px;line-height:28px;font-weight:400;color:#242424;white-space:pre;transform-origin:0 0;transform:scaleX(0.9069);">Refresh</span>
<svg style="position:absolute;left:1468px;top:102px;overflow:visible" width="26" height="26" viewBox="0 0 26 26" ><circle cx="9.20" cy="9.30" r="7.45" fill="none" stroke="#1a1a1a" stroke-width="1.6"/><circle cx="7.10" cy="6.90" r="1.35" fill="#1a1a1a"/><path d="M16.30 11.60 L23.90 19.60 V23.60 H19.80 V21.60 H17.40 V19.60 H15.00 V17.80 L12.60 16.00" fill="none" stroke="#1a1a1a" stroke-width="1.5" stroke-linecap="round" stroke-linejoin="round" stroke-linejoin="miter" stroke-linecap="butt"/></svg>
<span style="position:absolute;left:1502.84px;top:102px;font-size:21.5px;line-height:28px;font-weight:400;color:#242424;white-space:pre;transform-origin:0 0;transform:scaleX(0.9110);">Check Access</span>
<svg style="position:absolute;left:1663px;top:103px;overflow:visible" width="24" height="23" viewBox="0 0 24 23" ><circle cx="9.1" cy="5.9" r="5.2" fill="none" stroke="#3a3a3a" stroke-width="1.5"/><path d="M0.8 19.6 C1.4 14.2 4.8 11.4 9.1 11.4 C12.4 11.4 15 13 16.4 15.6" fill="none" stroke="#3a3a3a" stroke-width="1.5" stroke-linecap="round" stroke-linejoin="round" stroke-linecap="butt"/><path d="M13.4 18.2 H23 M19.6 14.8 L23.2 18.2 L19.6 21.6" fill="none" stroke="#0f6cbd" stroke-width="1.4" stroke-linecap="round" stroke-linejoin="round" stroke-linejoin="miter" stroke-linecap="butt"/></svg>
<span style="position:absolute;left:1698.00px;top:102px;font-size:21.5px;line-height:28px;font-weight:400;color:#242424;white-space:pre;transform-origin:0 0;transform:scaleX(0.9320);">Assign</span>
<svg style="position:absolute;left:1806.5px;top:104.5px;overflow:visible" width="4" height="21.2" viewBox="0 0 4 21.2" ><circle cx="2" cy="1.8" r="1.55" fill="#242424"/><circle cx="2" cy="10.6" r="1.55" fill="#242424"/><circle cx="2" cy="19.4" r="1.55" fill="#242424"/></svg>
<div style="position:absolute;left:1988px;top:98px;width:130.6px;height:34.5px;background:#0f6cbd;border-radius:5px;"></div>
<svg style="position:absolute;left:2004.6px;top:104px;overflow:visible" width="24" height="22" viewBox="0 0 24 22" ><path d="M8.9 2.8 H5 A3.4 3.4 0 0 0 1.6 6.2 V17.1 A3.4 3.4 0 0 0 5 20.5 H16.1 A3.4 3.4 0 0 0 19.5 17.1 V16.1" fill="none" stroke="#fff" stroke-width="1.6" stroke-linecap="round" stroke-linejoin="round" /><path d="M16.3 1.2 L23.2 7.9 L16.3 14.6 V11.2 C12 11 8.6 12.2 6.2 15.2 C6.8 9.4 10.4 5.4 16.3 4.8 Z" fill="none" stroke="#fff" stroke-width="1.6" stroke-linecap="round" stroke-linejoin="round" /></svg>
<span style="position:absolute;left:2037.25px;top:103px;font-size:18.5px;line-height:25px;font-weight:400;color:#fff;white-space:pre;transform-origin:0 0;transform:scaleX(0.8813);-webkit-text-stroke:0.5px #fff;">Share</span>
<svg style="position:absolute;left:2091.5px;top:113.8px;overflow:visible" width="10.6" height="5.8" viewBox="0 0 10.6 5.8" ><path d="M0.6 0.6 L5.3 5.2 L10.0 0.6" fill="none" stroke="#fff" stroke-width="1.3" stroke-linecap="round" stroke-linejoin="round" stroke-linejoin="miter"/></svg>
</div>
<section aria-label="Record header">
<div style="position:absolute;left:330px;top:172px;width:1805px;height:189px;background:#fff;border-radius:6px;box-shadow:0 1.5px 4px rgba(0,0,0,.16),0 0 2px rgba(0,0,0,.10);"></div>
<div><span style="position:absolute;left:360.75px;top:198px;font-size:30px;line-height:37px;font-weight:400;color:#242424;white-space:pre;transform-origin:0 0;transform:scaleX(1.0105);-webkit-text-stroke:0.75px #242424;">Harshitha's </span><span style="position:absolute;left:520.19px;top:198px;font-size:30px;line-height:37px;font-weight:400;color:#242424;white-space:pre;transform-origin:0 0;transform:scaleX(0.9877);-webkit-text-stroke:0.75px #242424;">Chennai </span><span style="position:absolute;left:639.82px;top:198px;font-size:30px;line-height:37px;font-weight:400;color:#242424;white-space:pre;transform-origin:0 0;transform:scaleX(0.9562);-webkit-text-stroke:0.75px #242424;">- </span><span style="position:absolute;left:659.85px;top:198px;font-size:30px;line-height:37px;font-weight:400;color:#242424;white-space:pre;transform-origin:0 0;transform:scaleX(1.0125);-webkit-text-stroke:0.75px #242424;">Dubai </span><span style="position:absolute;left:748.21px;top:198px;font-size:30px;line-height:37px;font-weight:400;color:#242424;white-space:pre;transform-origin:0 0;transform:scaleX(1.0620);-webkit-text-stroke:0.75px #242424;">booking </span><span style="position:absolute;left:868.81px;top:198px;font-size:30px;line-height:37px;font-weight:400;color:#242424;white-space:pre;transform-origin:0 0;transform:scaleX(1.0673);-webkit-text-stroke:0.75px #242424;">on </span><span style="position:absolute;left:913.07px;top:198px;font-size:30px;line-height:37px;font-weight:400;color:#242424;white-space:pre;transform-origin:0 0;transform:scaleX(1.0066);-webkit-text-stroke:0.75px #242424;">2/15/2025 </span><span style="position:absolute;left:1057.42px;top:198px;font-size:30px;line-height:37px;font-weight:400;color:#242424;white-space:pre;transform-origin:0 0;transform:scaleX(0.9269);-webkit-text-stroke:0.75px #242424;">12:00:00 </span><span style="position:absolute;left:1176.97px;top:198px;font-size:30px;line-height:37px;font-weight:400;color:#242424;white-space:pre;transform-origin:0 0;transform:scaleX(1.0265);-webkit-text-stroke:0.75px #242424;">AM</span></div>
<span style="position:absolute;left:1233.75px;top:206px;font-size:21.5px;line-height:28px;font-weight:400;color:#616161;white-space:pre;transform-origin:0 0;transform:scaleX(0.9161);">- Saved</span>
<span style="position:absolute;left:360.83px;top:243px;font-size:21.5px;line-height:28px;font-weight:400;color:#424242;white-space:pre;transform-origin:0 0;transform:scaleX(1.0219);-webkit-text-stroke:0.5px #424242;">Booking</span>
<span style="position:absolute;left:452.58px;top:243px;font-size:21.5px;line-height:28px;font-weight:400;color:#424242;white-space:pre;transform-origin:0 0;transform:scaleX(0.6333);-webkit-text-stroke:0.5px #424242;">·</span>
<span style="position:absolute;left:472.65px;top:243px;font-size:21.5px;line-height:28px;font-weight:400;color:#424242;white-space:pre;transform-origin:0 0;transform:scaleX(1.0028);-webkit-text-stroke:0.5px #424242;">Update Booking Form</span>
<svg style="position:absolute;left:692.4px;top:254.3px;overflow:visible" width="11.2" height="5.9" viewBox="0 0 11.2 5.9" ><path d="M0.6 0.6 L5.6 5.300000000000001 L10.6 0.6" fill="none" stroke="#424242" stroke-width="1.2" stroke-linecap="round" stroke-linejoin="round" stroke-linejoin="miter"/></svg>
<span style="position:absolute;left:362.40px;top:300px;font-size:23.5px;line-height:30px;font-weight:400;color:#242424;white-space:pre;transform-origin:0 0;transform:scaleX(1.0027);-webkit-text-stroke:0.6px #242424;">General</span>
<div style="position:absolute;left:363px;top:348px;width:82.7px;height:4.2px;background:#0f6cbd;border-radius:2.1px;"></div>
<span style="position:absolute;left:476.22px;top:300px;font-size:23.5px;line-height:30px;font-weight:400;color:#242424;white-space:pre;transform-origin:0 0;transform:scaleX(0.9794);">Related</span>
<svg style="position:absolute;left:567.6px;top:308.3px;overflow:visible" width="17.4" height="9.6" viewBox="0 0 17.4 9.6" ><path d="M0.6 0.6 L8.7 9.0 L16.799999999999997 0.6" fill="none" stroke="#242424" stroke-width="1.4" stroke-linecap="round" stroke-linejoin="round" stroke-linejoin="miter"/></svg>
</section>
<section aria-label="General">
<div style="position:absolute;left:330px;top:385px;width:1805px;height:652.5px;background:#fff;border-radius:6px;box-shadow:0 1.5px 4px rgba(0,0,0,.16),0 0 2px rgba(0,0,0,.10);"></div>
<span style="position:absolute;left:354.78px;top:419px;font-size:21.5px;line-height:28px;font-weight:400;color:#242424;white-space:pre;transform-origin:0 0;transform:scaleX(0.9703);">Name</span>
<div style="position:absolute;left:416.25px;top:416.25px;width:94.25px;height:29.5px;box-sizing:border-box;background:#ededf1;border:1px solid #cfcfd3;"></div>
<span style="position:absolute;left:417.06px;top:419px;font-size:21.5px;line-height:28px;font-weight:400;color:#0c8a8a;white-space:pre;transform-origin:0 0;transform:scaleX(0.9386);">lms_name</span>
<div style="position:absolute;left:631px;top:413px;width:1475.5px;height:48px;background:#f5f5f5;border-radius:5px;"></div>
<svg style="position:absolute;left:605.9px;top:421.9px;overflow:visible" width="14" height="17.2" viewBox="0 0 14 17.2" ><rect x="0.7" y="5.6" width="12.6" height="10.7" rx="1.2" fill="none" stroke="#242424" stroke-width="1.35"/><path d="M3.8 5.5 V3.8 A3.15 3.15 0 0 1 10.1 3.8 V5.5" fill="none" stroke="#242424" stroke-width="1.35" stroke-linecap="round" stroke-linejoin="round" stroke-linecap="butt"/><circle cx="6.95" cy="11.1" r="1.2" fill="#242424"/></svg>
<span style="position:absolute;left:354.79px;top:491px;font-size:21.5px;line-height:28px;font-weight:400;color:#242424;white-space:pre;transform-origin:0 0;transform:scaleX(0.9616);">Customer</span>
<div style="position:absolute;left:450px;top:488.25px;width:128.75px;height:29.5px;box-sizing:border-box;background:#ededf1;border:1px solid #cfcfd3;"></div>
<span style="position:absolute;left:450.80px;top:491px;font-size:21.5px;line-height:28px;font-weight:400;color:#0c8a8a;white-space:pre;transform-origin:0 0;transform:scaleX(0.9480);">lms_customer</span>
<div style="position:absolute;left:631px;top:485px;width:1475.5px;height:48px;background:#f5f5f5;border-radius:5px;"></div>
<span style="position:absolute;left:591.75px;top:490px;font-size:23.5px;line-height:30px;font-weight:400;color:#a4262c;white-space:pre;transform-origin:0 0;transform:scaleX(0.8333);">*</span>
<svg style="position:absolute;left:605.9px;top:493.9px;overflow:visible" width="14" height="17.2" viewBox="0 0 14 17.2" ><rect x="0.7" y="5.6" width="12.6" height="10.7" rx="1.2" fill="none" stroke="#242424" stroke-width="1.35"/><path d="M3.8 5.5 V3.8 A3.15 3.15 0 0 1 10.1 3.8 V5.5" fill="none" stroke="#242424" stroke-width="1.35" stroke-linecap="round" stroke-linejoin="round" stroke-linecap="butt"/><circle cx="6.95" cy="11.1" r="1.2" fill="#242424"/></svg>
<span style="position:absolute;left:354.80px;top:563px;font-size:21.5px;line-height:28px;font-weight:400;color:#242424;white-space:pre;transform-origin:0 0;transform:scaleX(0.9474);">Route</span>
<div style="position:absolute;left:415px;top:560.25px;width:91.75px;height:29.5px;box-sizing:border-box;background:#ededf1;border:1px solid #cfcfd3;"></div>
<span style="position:absolute;left:415.79px;top:563px;font-size:21.5px;line-height:28px;font-weight:400;color:#0c8a8a;white-space:pre;transform-origin:0 0;transform:scaleX(0.9601);">lms_route</span>
<div style="position:absolute;left:631px;top:557px;width:1475.5px;height:48px;background:#f5f5f5;border-radius:5px;"></div>
<span style="position:absolute;left:591.75px;top:562px;font-size:23.5px;line-height:30px;font-weight:400;color:#a4262c;white-space:pre;transform-origin:0 0;transform:scaleX(0.8333);">*</span>
<svg style="position:absolute;left:605.9px;top:565.9px;overflow:visible" width="14" height="17.2" viewBox="0 0 14 17.2" ><rect x="0.7" y="5.6" width="12.6" height="10.7" rx="1.2" fill="none" stroke="#242424" stroke-width="1.35"/><path d="M3.8 5.5 V3.8 A3.15 3.15 0 0 1 10.1 3.8 V5.5" fill="none" stroke="#242424" stroke-width="1.35" stroke-linecap="round" stroke-linejoin="round" stroke-linecap="butt"/><circle cx="6.95" cy="11.1" r="1.2" fill="#242424"/></svg>
<span style="position:absolute;left:354.88px;top:635px;font-size:21.5px;line-height:28px;font-weight:400;color:#242424;white-space:pre;transform-origin:0 0;transform:scaleX(0.8652);">Class</span>
<div style="position:absolute;left:407px;top:632.25px;width:85.5px;height:29.5px;box-sizing:border-box;background:#ededf1;border:1px solid #cfcfd3;"></div>
<span style="position:absolute;left:407.86px;top:635px;font-size:21.5px;line-height:28px;font-weight:400;color:#0c8a8a;white-space:pre;transform-origin:0 0;transform:scaleX(0.8907);">lms_class</span>
<div style="position:absolute;left:631px;top:629px;width:1475.5px;height:48px;background:#f5f5f5;border-radius:5px;"></div>
<svg style="position:absolute;left:605.9px;top:637.9px;overflow:visible" width="14" height="17.2" viewBox="0 0 14 17.2" ><rect x="0.7" y="5.6" width="12.6" height="10.7" rx="1.2" fill="none" stroke="#242424" stroke-width="1.35"/><path d="M3.8 5.5 V3.8 A3.15 3.15 0 0 1 10.1 3.8 V5.5" fill="none" stroke="#242424" stroke-width="1.35" stroke-linecap="round" stroke-linejoin="round" stroke-linecap="butt"/><circle cx="6.95" cy="11.1" r="1.2" fill="#242424"/></svg>
<span style="position:absolute;left:354.78px;top:707px;font-size:21.5px;line-height:28px;font-weight:400;color:#242424;white-space:pre;transform-origin:0 0;transform:scaleX(0.9730);">Flight Date</span>
<div style="position:absolute;left:355px;top:734.0px;width:131.75px;height:29.5px;box-sizing:border-box;background:#ededf1;border:1px solid #cfcfd3;"></div>
<span style="position:absolute;left:355.76px;top:737px;font-size:21.5px;line-height:28px;font-weight:400;color:#0c8a8a;white-space:pre;transform-origin:0 0;transform:scaleX(0.9851);">lms_flightdate</span>
<div style="position:absolute;left:631px;top:701px;width:1475.5px;height:48px;background:#f5f5f5;border-radius:5px;"></div>
<span style="position:absolute;left:591.75px;top:706px;font-size:23.5px;line-height:30px;font-weight:400;color:#a4262c;white-space:pre;transform-origin:0 0;transform:scaleX(0.8333);">*</span>
<svg style="position:absolute;left:605.9px;top:709.9px;overflow:visible" width="14" height="17.2" viewBox="0 0 14 17.2" ><rect x="0.7" y="5.6" width="12.6" height="10.7" rx="1.2" fill="none" stroke="#242424" stroke-width="1.35"/><path d="M3.8 5.5 V3.8 A3.15 3.15 0 0 1 10.1 3.8 V5.5" fill="none" stroke="#242424" stroke-width="1.35" stroke-linecap="round" stroke-linejoin="round" stroke-linecap="butt"/><circle cx="6.95" cy="11.1" r="1.2" fill="#242424"/></svg>
<span style="position:absolute;left:354.82px;top:794px;font-size:21.5px;line-height:28px;font-weight:400;color:#242424;white-space:pre;transform-origin:0 0;transform:scaleX(0.9279);">Points Earned</span>
<div style="position:absolute;left:355px;top:821.0px;width:164.5px;height:29.5px;box-sizing:border-box;background:#ededf1;border:1px solid #cfcfd3;"></div>
<span style="position:absolute;left:355.79px;top:823px;font-size:21.5px;line-height:28px;font-weight:400;color:#0c8a8a;white-space:pre;transform-origin:0 0;transform:scaleX(0.9627);">lms_pointsearned</span>
<div style="position:absolute;left:631px;top:788px;width:1475.5px;height:48px;background:#f5f5f5;border-radius:5px;"></div>
<svg style="position:absolute;left:605.9px;top:796.9px;overflow:visible" width="14" height="17.2" viewBox="0 0 14 17.2" ><rect x="0.7" y="5.6" width="12.6" height="10.7" rx="1.2" fill="none" stroke="#242424" stroke-width="1.35"/><path d="M3.8 5.5 V3.8 A3.15 3.15 0 0 1 10.1 3.8 V5.5" fill="none" stroke="#242424" stroke-width="1.35" stroke-linecap="round" stroke-linejoin="round" stroke-linecap="butt"/><circle cx="6.95" cy="11.1" r="1.2" fill="#242424"/></svg>
<span style="position:absolute;left:354.79px;top:881px;font-size:21.5px;line-height:28px;font-weight:400;color:#242424;white-space:pre;transform-origin:0 0;transform:scaleX(0.9572);">Booking Status</span>
<div style="position:absolute;left:355px;top:908.0px;width:173.75px;height:29.5px;box-sizing:border-box;background:#ededf1;border:1px solid #cfcfd3;"></div>
<span style="position:absolute;left:355.78px;top:911px;font-size:21.5px;line-height:28px;font-weight:400;color:#0c8a8a;white-space:pre;transform-origin:0 0;transform:scaleX(0.9684);">lms_bookingstatus</span>
<div style="position:absolute;left:631px;top:875px;width:1475.5px;height:47px;background:#f5f5f5;border-radius:5px;overflow:hidden"><div style="position:absolute;left:0;right:0;bottom:0;height:3px;background:#0f6cbd"></div></div>
<span style="position:absolute;left:354.79px;top:968px;font-size:21.5px;line-height:28px;font-weight:400;color:#242424;white-space:pre;transform-origin:0 0;transform:scaleX(0.9612);">Owner</span>
<div style="position:absolute;left:422px;top:965.25px;width:76.75px;height:29.5px;box-sizing:border-box;background:#ededf1;border:1px solid #cfcfd3;"></div>
<span style="position:absolute;left:423.75px;top:968px;font-size:21.5px;line-height:28px;font-weight:400;color:#0c8a8a;white-space:pre;transform-origin:0 0;transform:scaleX(0.9921);">ownerid</span>
<div style="position:absolute;left:631px;top:962px;width:1475.5px;height:48px;background:#f5f5f5;border-radius:5px;"></div>
<span style="position:absolute;left:614.75px;top:967px;font-size:23.5px;line-height:30px;font-weight:400;color:#a4262c;white-space:pre;transform-origin:0 0;transform:scaleX(0.8333);">*</span>
<div><span style="position:absolute;left:650.04px;top:425px;font-size:21.5px;line-height:28px;font-weight:400;color:#242424;white-space:pre;transform-origin:0 0;transform:scaleX(0.9551);">Harshitha's </span><span style="position:absolute;left:757.66px;top:425px;font-size:21.5px;line-height:28px;font-weight:400;color:#242424;white-space:pre;transform-origin:0 0;transform:scaleX(0.9385);">Chennai </span><span style="position:absolute;left:840.00px;top:425px;font-size:21.5px;line-height:28px;font-weight:400;color:#242424;white-space:pre;transform-origin:0 0;transform:scaleX(0.8571);">- </span><span style="position:absolute;left:853.33px;top:425px;font-size:21.5px;line-height:28px;font-weight:400;color:#242424;white-space:pre;transform-origin:0 0;transform:scaleX(0.9669);">Dubai </span><span style="position:absolute;left:914.30px;top:425px;font-size:21.5px;line-height:28px;font-weight:400;color:#242424;white-space:pre;transform-origin:0 0;transform:scaleX(1.0033);">booking </span><span style="position:absolute;left:997.00px;top:425px;font-size:21.5px;line-height:28px;font-weight:400;color:#242424;white-space:pre;transform-origin:0 0;transform:scaleX(0.9714);">on </span><span style="position:absolute;left:1026.01px;top:425px;font-size:21.5px;line-height:28px;font-weight:400;color:#242424;white-space:pre;transform-origin:0 0;transform:scaleX(0.9853);">2/15/2025 </span><span style="position:absolute;left:1128.70px;top:425px;font-size:21.5px;line-height:28px;font-weight:400;color:#242424;white-space:pre;transform-origin:0 0;transform:scaleX(0.8981);">12:00:00 </span><span style="position:absolute;left:1211.10px;top:425px;font-size:21.5px;line-height:28px;font-weight:400;color:#242424;white-space:pre;transform-origin:0 0;transform:scaleX(0.9700);">AM</span></div>
<div style="position:absolute;left:636.75px;top:491px;width:148.75px;height:35.75px;background:#ebf3fc;border-radius:6px;"></div>
<svg style="position:absolute;left:647.1px;top:499px;overflow:visible" width="18.8" height="18.8" viewBox="0 0 18.8 18.8" ><rect x="0.75" y="0.75" width="17.3" height="17.3" fill="none" stroke="#115ea3" stroke-width="1.5"/><rect x="0" y="0" width="18.8" height="1.9" fill="#115ea3"/><circle cx="9.4" cy="8" r="4.35" fill="none" stroke="#115ea3" stroke-width="1.4"/><path d="M2 18 C2.5 14.6 5.4 13.1 9.4 13.1 C13.4 13.1 16.3 14.6 16.8 18" fill="none" stroke="#115ea3" stroke-width="1.4" stroke-linecap="round" stroke-linejoin="round" stroke-linecap="butt"/></svg>
<span style="position:absolute;left:679.25px;top:497px;font-size:21.5px;line-height:28px;font-weight:400;color:#115ea3;white-space:pre;transform-origin:0 0;transform:scaleX(0.9735);text-decoration:underline;text-decoration-thickness:1.5px;text-underline-offset:1.6px;">M Harshita</span>
<div style="position:absolute;left:636.75px;top:563px;width:197.75px;height:35.5px;background:#ebf3fc;border-radius:6px;"></div>
<svg style="position:absolute;left:646px;top:569.9px;overflow:visible" width="21.1" height="21.1" viewBox="0 0 21.1 21.1" ><rect x="0.75" y="0.75" width="19.6" height="19.6" fill="none" stroke="#115ea3" stroke-width="1.5"/><g transform="translate(3.2,4.1) scale(0.66)"><path d="M4.9 0.95 H8.9 V3.1 A3.05 3.05 0 0 0 15 3.1 V0.95 H19 V6.9 H20.1 A3.07 3.07 0 0 1 20.1 13.05 H19 V19 H15 V16.4 A3.05 3.05 0 0 0 8.9 16.4 V19 H4.9 V13.05 H3.77 A3.07 3.07 0 0 1 3.77 6.9 H4.9 Z" fill="none" stroke="#115ea3" stroke-width="2.0" stroke-linecap="round" stroke-linejoin="round" stroke-linejoin="miter"/></g></svg>
<span style="position:absolute;left:679.00px;top:569px;font-size:21.5px;line-height:28px;font-weight:400;color:#115ea3;white-space:pre;transform-origin:0 0;transform:scaleX(0.9675);text-decoration:underline;text-decoration-thickness:1.5px;text-underline-offset:1.6px;">Chennai - Dubai</span>
<span style="position:absolute;left:649.56px;top:640px;font-size:21.5px;line-height:28px;font-weight:400;color:#242424;white-space:pre;transform-origin:0 0;transform:scaleX(0.9424);">Economy</span>
<span style="position:absolute;left:649.51px;top:713px;font-size:21.5px;line-height:28px;font-weight:400;color:#242424;white-space:pre;transform-origin:0 0;transform:scaleX(0.9901);">2/15/2025</span>
<span style="position:absolute;left:650.50px;top:799px;font-size:21.5px;line-height:28px;font-weight:400;color:#242424;white-space:pre;transform-origin:0 0;transform:scaleX(0.8833);">0.00</span>
<span style="position:absolute;left:649.66px;top:886px;font-size:21.5px;line-height:28px;font-weight:400;color:#242424;white-space:pre;transform-origin:0 0;transform:scaleX(0.9406);">Cancelled</span>
<svg style="position:absolute;left:2067px;top:894.3px;overflow:visible" width="18.3" height="9.6" viewBox="0 0 18.3 9.6" ><path d="M0.6 0.6 L9.15 9.0 L17.7 0.6" fill="none" stroke="#424242" stroke-width="1.5" stroke-linecap="round" stroke-linejoin="round" stroke-linejoin="miter"/></svg>
<div style="position:absolute;left:626px;top:866px;width:132px;height:62.5px;box-sizing:border-box;border:6px solid #e41a1c;"></div>
<div style="position:absolute;left:636.5px;top:967.75px;width:240px;height:36.25px;background:#ebf3fc;border-radius:18.2px;"></div>
<div style="position:absolute;left:636.75px;top:967.75px;width:36.25px;height:36.25px;background:#005b70;border-radius:50%;"></div>
<span style="position:absolute;left:641.38px;top:976px;font-size:15px;line-height:21px;font-weight:700;color:#fff;white-space:pre;transform-origin:0 0;transform:scaleX(1.1222);">HM</span>
<span style="position:absolute;left:685.00px;top:973px;font-size:21.5px;line-height:28px;font-weight:400;color:#115ea3;white-space:pre;transform-origin:0 0;transform:scaleX(0.9787);text-decoration:underline;text-decoration-thickness:1.5px;text-underline-offset:1.6px;">Harshita Madem</span>
<svg style="position:absolute;left:850.6px;top:979.4px;overflow:visible" width="12.8" height="12.8" viewBox="0 0 12.8 12.8" ><path d="M0.7 0.7 L12.100000000000001 12.100000000000001 M12.100000000000001 0.7 L0.7 12.100000000000001" fill="none" stroke="#115ea3" stroke-width="1.7" stroke-linecap="round" stroke-linejoin="round" stroke-linecap="butt"/></svg>
<svg style="position:absolute;left:2072px;top:975px;overflow:visible" width="21.3" height="20.6" viewBox="0 0 21.3 20.6" ><circle cx="13.8" cy="7.4" r="6.6" fill="none" stroke="#424242" stroke-width="1.4"/><path d="M9 12.4 L0.8 20" fill="none" stroke="#424242" stroke-width="1.5" stroke-linecap="round" stroke-linejoin="round" /></svg>
</section>
</main>
</body></html>
